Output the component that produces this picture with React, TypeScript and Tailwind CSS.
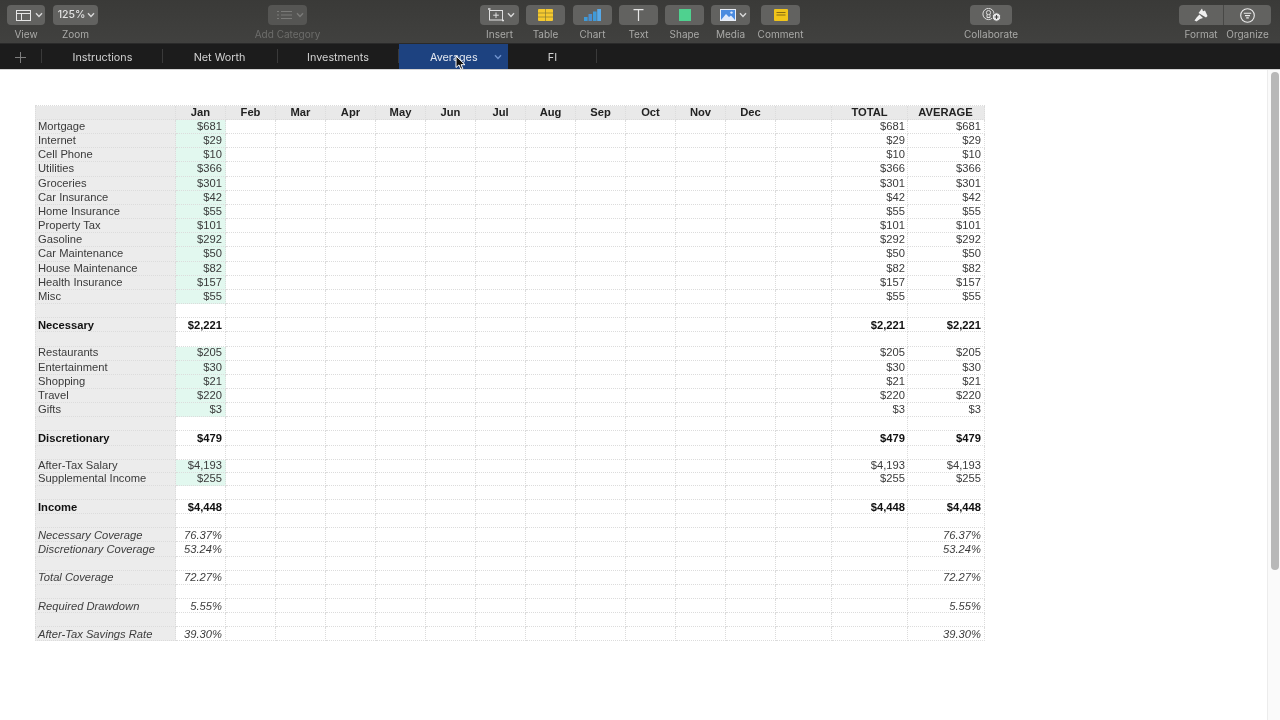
import React from "react";

const months = ["Feb", "Mar", "Apr", "May", "Jun", "Jul", "Aug", "Sep", "Oct", "Nov", "Dec"];
const gridCols = "grid grid-cols-[141px_repeat(12,50px)_56px_76px_77px] w-[950px]";
const cellLine = "border-b border-r border-dotted border-[#dcdcdc] flex items-center overflow-hidden whitespace-nowrap";

type Kind = "item" | "blank" | "bold" | "italic" | "short";
type Row = { label?: string; value?: string; kind: Kind };

const rows: Row[] = [
  { label: "Mortgage", value: "$681", kind: "item" },
  { label: "Internet", value: "$29", kind: "item" },
  { label: "Cell Phone", value: "$10", kind: "item" },
  { label: "Utilities", value: "$366", kind: "item" },
  { label: "Groceries", value: "$301", kind: "item" },
  { label: "Car Insurance", value: "$42", kind: "item" },
  { label: "Home Insurance", value: "$55", kind: "item" },
  { label: "Property Tax", value: "$101", kind: "item" },
  { label: "Gasoline", value: "$292", kind: "item" },
  { label: "Car Maintenance", value: "$50", kind: "item" },
  { label: "House Maintenance", value: "$82", kind: "item" },
  { label: "Health Insurance", value: "$157", kind: "item" },
  { label: "Misc", value: "$55", kind: "item" },
  { kind: "blank" },
  { label: "Necessary", value: "$2,221", kind: "bold" },
  { kind: "blank" },
  { label: "Restaurants", value: "$205", kind: "item" },
  { label: "Entertainment", value: "$30", kind: "item" },
  { label: "Shopping", value: "$21", kind: "item" },
  { label: "Travel", value: "$220", kind: "item" },
  { label: "Gifts", value: "$3", kind: "item" },
  { kind: "blank" },
  { label: "Discretionary", value: "$479", kind: "bold" },
  { kind: "blank" },
  { label: "After-Tax Salary", value: "$4,193", kind: "short" },
  { label: "Supplemental Income", value: "$255", kind: "short" },
  { kind: "blank" },
  { label: "Income", value: "$4,448", kind: "bold" },
  { kind: "blank" },
  { label: "Necessary Coverage", value: "76.37%", kind: "italic" },
  { label: "Discretionary Coverage", value: "53.24%", kind: "italic" },
  { kind: "blank" },
  { label: "Total Coverage", value: "72.27%", kind: "italic" },
  { kind: "blank" },
  { label: "Required Drawdown", value: "5.55%", kind: "italic" },
  { kind: "blank" },
  { label: "After-Tax Savings Rate", value: "39.30%", kind: "italic" },
];

function Chevron({ className = "text-[#d8d8d8]" }: { className?: string }) {
  return (
    <svg width="8" height="6" viewBox="0 0 8 6" className={className} fill="none" stroke="currentColor" strokeWidth="1.4">
      <path d="M1 1.2 4 4.4 7 1.2" />
    </svg>
  );
}

function Tool({ label, children, className, dim }: { label: string; children: React.ReactNode; className: string; dim?: boolean }) {
  return (
    <div className={`flex flex-col items-center shrink-0 ${className}`}>
      <div className={`h-[20px] w-full rounded-[4px] flex items-center justify-center ${dim ? "bg-[#555553]" : "bg-[#626260]"}`}>{children}</div>
      <div className={`mt-[2px] h-[14px] leading-[14px] text-[10px] whitespace-nowrap ${dim ? "text-[#6d6d6b]" : "text-[#a9a9a7]"}`}>{label}</div>
    </div>
  );
}

function Tab({ label, className }: { label: string; className: string }) {
  return (
    <div className={`h-[25px] shrink-0 flex items-center justify-center relative pt-[3px] text-[10.8px] text-[#d2d2d2] ${className}`}>
      {label}
      <div className="absolute right-0 top-[5px] h-[14px] w-px bg-[#3a3a3a]" />
    </div>
  );
}

function DataRow({ row }: { row: Row }) {
  const h = row.kind === "short" ? "h-[13px]" : "h-[14.17px]";
  const isItem = row.kind === "item" || row.kind === "short";
  const shift = row.kind === "bold" || row.kind === "italic" ? "pt-[1.5px]" : "";
  const txt = row.kind === "bold" ? "font-bold text-[#111111]" : row.kind === "italic" ? "italic text-[#3c3c3c]" : "text-[#3a3a3a]";
  return (
    <div className={gridCols}>
      <div className={`${cellLine} ${h} ${txt} ${shift} bg-[#ececec] pl-[2px] border-l`}>{row.label}</div>
      <div className={`${cellLine} ${h} ${txt} ${shift} ${isItem ? "bg-[#e2f8ef]" : ""} justify-end pr-[3px]`}>{row.value}</div>
      {months.map((m) => (
        <div key={m} className={`${cellLine} ${h}`} />
      ))}
      <div className={`${cellLine} ${h}`} />
      <div className={`${cellLine} ${h} ${txt} ${shift} justify-end pr-[2px]`}>{row.kind === "italic" ? "" : row.value}</div>
      <div className={`${cellLine} ${h} ${txt} ${shift} justify-end pr-[3px]`}>{row.value}</div>
    </div>
  );
}

export default function App() {
  return (
    <div className="w-[1280px] h-[720px] overflow-hidden flex flex-col bg-white blur-[0.5px] font-['Liberation_Sans',Arial,sans-serif]">
      {/* Toolbar */}
      <div className="h-[44px] shrink-0 bg-gradient-to-b from-[#3a3a38] to-[#41413f] border-b border-[#2a2a2a] flex items-start pt-[5px] pl-[7px] font-['Inter','Liberation_Sans',sans-serif]">
        <Tool label="View" className="w-[38px]">
          <div className="flex items-center gap-[4px] pl-[6px]">
            <svg width="15" height="11" viewBox="0 0 15 11" fill="none" stroke="#e6e6e6" strokeWidth="1">
              <rect x="0.5" y="0.5" width="14" height="10" />
              <path d="M0.5 3.5H14.5M5.5 3.5V10.5" />
            </svg>
            <Chevron />
          </div>
        </Tool>
        <Tool label="Zoom" className="w-[45px] ml-[8px]">
          <div className="flex items-center gap-[2px] pl-[2px] text-[10.5px] font-medium text-[#e2e2e2]">
            125%
            <Chevron />
          </div>
        </Tool>
        <Tool label="Add Category" dim className="w-[39px] ml-[170px]">
          <div className="flex items-center gap-[4px] pl-[5px]">
            <svg width="15" height="10" viewBox="0 0 15 10" fill="none" stroke="#7b7b79" strokeWidth="1.2">
              <path d="M0 1.5H2M4 1.5H15M0 5H2M4 5H15M0 8.5H2M4 8.5H15" />
            </svg>
            <Chevron className="text-[#7b7b79]" />
          </div>
        </Tool>
        <Tool label="Insert" className="w-[39px] ml-[173px]">
          <div className="flex items-center gap-[3px] pl-[4px]">
            <svg width="16" height="14" viewBox="0 0 16 14" fill="none" stroke="#e0e0e0" strokeWidth="1">
              <rect x="1.5" y="2.5" width="13" height="9.5" />
              <path d="M8 4.5V10M5.2 7.2H10.8" />
              <path d="M0 1H2.5M14 12.5H16" strokeWidth="1.6" />
            </svg>
            <Chevron />
          </div>
        </Tool>
        <Tool label="Table" className="w-[39px] ml-[7px]">
          <svg width="15" height="12" viewBox="0 0 15 12">
            <rect width="15" height="12" rx="1" fill="#f5c92f" />
            <path d="M0 4H15M0 8H15M7.5 0V12" stroke="#8a7a30" strokeWidth="0.7" />
          </svg>
        </Tool>
        <Tool label="Chart" className="w-[39px] ml-[8px]">
          <svg width="17" height="12" viewBox="0 0 17 12" fill="#3f9ad8">
            <rect x="0" y="8" width="3.6" height="4" />
            <rect x="4.5" y="5" width="3.6" height="7" fill="#4a8fd0" />
            <rect x="9" y="2.5" width="3.6" height="9.5" fill="#3f9ad8" />
            <rect x="13.2" y="0" width="3.8" height="12" fill="#57a9e8" />
          </svg>
        </Tool>
        <Tool label="Text" className="w-[39px] ml-[7px]">
          <svg width="11" height="12" viewBox="0 0 11 12" fill="none" stroke="#e8e8e8" strokeWidth="1.2">
            <path d="M0.5 0.6H10.5M5.5 0.6V12" />
          </svg>
        </Tool>
        <Tool label="Shape" className="w-[39px] ml-[7px]">
          <div className="w-[12px] h-[12px] bg-[#4fd18f]" />
        </Tool>
        <Tool label="Media" className="w-[39px] ml-[7px]">
          <div className="flex items-center gap-[3px] pl-[5px]">
            <svg width="16" height="12" viewBox="0 0 16 12">
              <rect width="16" height="12" fill="#e9eef7" />
              <rect x="1" y="1" width="14" height="10" fill="#4a8be0" />
              <path d="M1 11 6 5l3 3 2-1.5 4 4.5z" fill="#dfe9fa" />
              <circle cx="11.5" cy="3.6" r="1.2" fill="#dfe9fa" />
            </svg>
            <Chevron />
          </div>
        </Tool>
        <Tool label="Comment" className="w-[39px] ml-[11px]">
          <svg width="14" height="12" viewBox="0 0 14 12">
            <rect width="14" height="12" rx="1" fill="#f0c419" />
            <path d="M2.5 3.5H11.5M2.5 6H11.5" stroke="#7a6212" strokeWidth="0.9" />
          </svg>
        </Tool>
        <Tool label="Collaborate" className="w-[42px] ml-[170px]">
          <svg width="19" height="14" viewBox="0 0 19 14" fill="none" stroke="#dedede" strokeWidth="1">
            <circle cx="6.5" cy="6" r="5.6" />
            <circle cx="6.5" cy="4.6" r="2.1" />
            <path d="M5 6.5v3h3v-3" />
            <circle cx="14.5" cy="9" r="4.2" fill="#e8e8e8" stroke="#626260" />
            <path d="M12.5 9H16.5M14.5 7V11" stroke="#444" strokeWidth="1.1" />
          </svg>
        </Tool>
        <div className="ml-[167px] flex shrink-0">
          <Tool label="Format" className="w-[44px] [&>div:first-child]:rounded-r-none">
            <svg width="14" height="14" viewBox="0 0 14 14" fill="#f0f0f0">
              <path d="M4.5 5 8 0.5l1 2.7 2-.7L13.5 8 12 9.5z" />
              <path d="M5.5 6.5 9 10l-3 1-3.5 2.5L.5 12.5 3 9z" />
            </svg>
          </Tool>
          <div className="w-px h-[20px] bg-[#484846]" />
          <Tool label="Organize" className="w-[47px] [&>div:first-child]:rounded-l-none">
            <svg width="15" height="15" viewBox="0 0 15 15" fill="none" stroke="#ececec" strokeWidth="1.1">
              <circle cx="7.5" cy="7.5" r="6.8" />
              <path d="M3.8 5.3H11.2M5 7.6H10M6.2 9.9H8.8" />
            </svg>
          </Tool>
        </div>
      </div>

      {/* Sheet tabs */}
      <div className="h-[25px] shrink-0 bg-[#1c1c1c] flex items-start font-['Inter','Liberation_Sans',sans-serif] border-b border-[#d5d5d5] box-content">
        <div className="w-[42px] h-[25px] shrink-0 flex items-center justify-center relative pr-[2px] pt-[1px]">
          <svg width="11" height="11" viewBox="0 0 11 11" stroke="#7e7e7e" strokeWidth="1">
            <path d="M5.5 0V11M0 5.5H11" />
          </svg>
          <div className="absolute right-0 top-[5px] h-[14px] w-px bg-[#3a3a3a]" />
        </div>
        <Tab label="Instructions" className="w-[121px]" />
        <Tab label="Net Worth" className="w-[115px] pr-[2px]" />
        <Tab label="Investments" className="w-[121px] pr-[1px]" />
        <div className="w-[109px] h-[25px] shrink-0 bg-[#1d4280] relative flex items-center pl-[31px] pt-[3px] text-[10.8px] text-[#e4e8f0]">
          Averages
          <span className="absolute right-[6px] top-[10px]">
            <Chevron className="text-[#6f92cc]" />
          </span>
          <svg width="12" height="16" viewBox="0 0 12 16" className="absolute left-[56px] top-[11px]">
            <path d="M1 1v11.5l3-2.6 1.9 4.4 1.9-.8L6 9.7h4z" fill="#111" stroke="#fff" strokeWidth="1" />
          </svg>
        </div>
        <Tab label="FI" className="w-[89px]" />
      </div>

      {/* Content */}
      <div className="flex-1 flex min-h-0 bg-white">
        <div className="flex-1 pl-[35px] pt-[35px] text-[11.2px] leading-none">
          <div className={`${gridCols} border-t border-dotted border-[#dcdcdc]`}>
            <div className={`${cellLine} h-[14px] bg-[#e9e9e9] border-l`} />
            {["Jan", ...months].map((m) => (
              <div key={m} className={`${cellLine} h-[14px] bg-[#e9e9e9] justify-center font-bold text-[#222222]`}>{m}</div>
            ))}
            <div className={`${cellLine} h-[14px] bg-[#e9e9e9]`} />
            <div className={`${cellLine} h-[14px] bg-[#e9e9e9] justify-center font-bold text-[#222222]`}>TOTAL</div>
            <div className={`${cellLine} h-[14px] bg-[#e9e9e9] justify-center pr-[1px] font-bold text-[#222222]`}>AVERAGE</div>
          </div>
          {rows.map((r, i) => (
            <DataRow key={i} row={r} />
          ))}
        </div>
        <div className="w-[13px] shrink-0 bg-[#fafafa] border-l border-[#ececec] pl-[3px] pt-[2px]">
          <div className="w-[8px] h-[498px] rounded-full bg-[#b8b8b8]" />
        </div>
      </div>
    </div>
  );
}
